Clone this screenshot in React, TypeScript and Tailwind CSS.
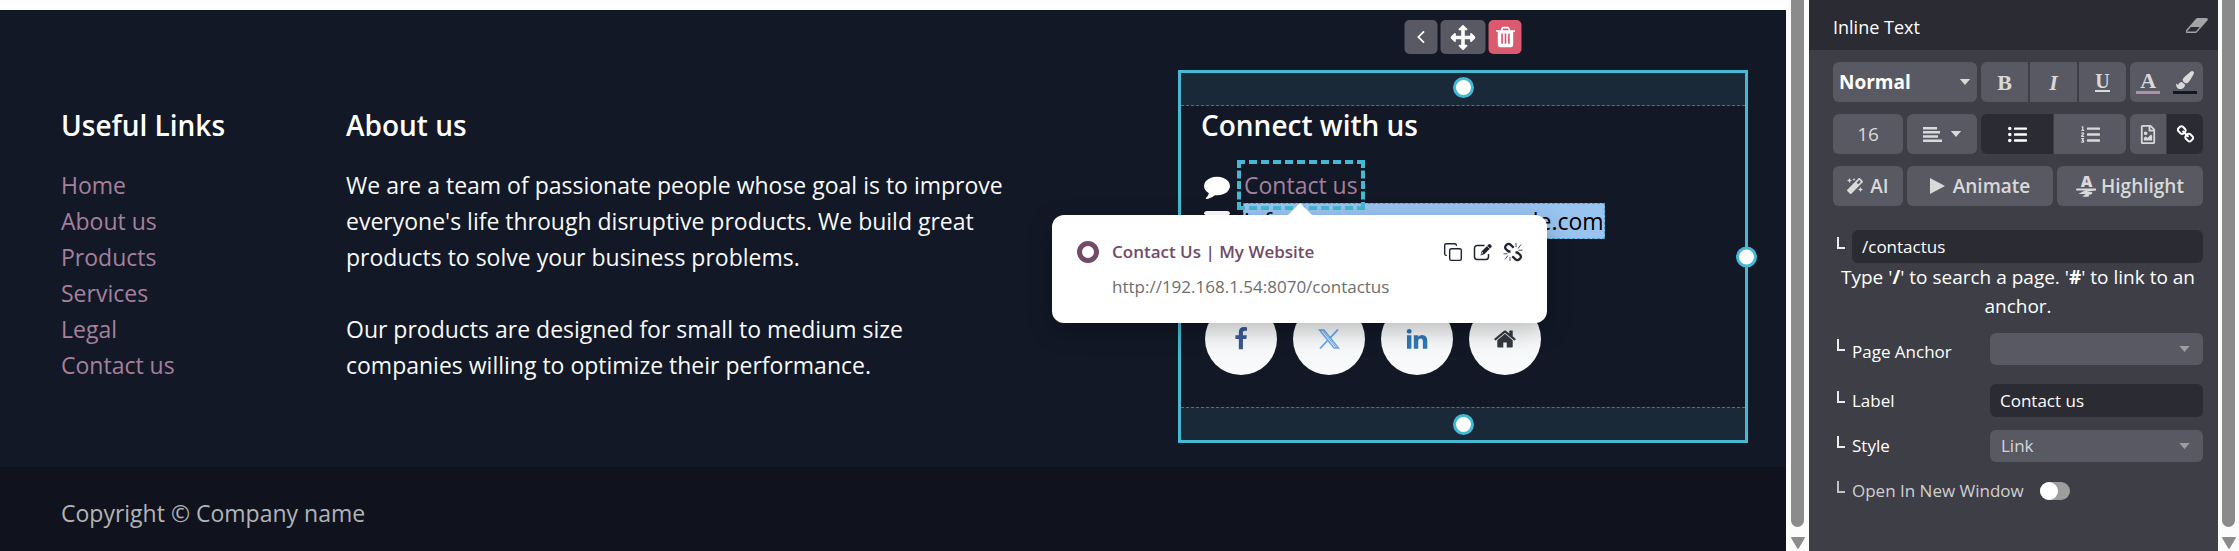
import type { ReactNode } from "react";
import { Copy } from "lucide-react";
import { FaListOl, FaListUl, FaMagic, FaPaintBrush, FaRegFileImage } from "react-icons/fa";

const LINKS = ["Home", "About us", "Products", "Services", "Legal", "Contact us"];

const PATHS = {
  comment:
    "M1792 896q0 174-120 321.5t-326 233-450 85.5q-70 0-145-8-198 175-460 242-49 14-114 22h-5q-15 0-27-10.5t-16-27.5v-1q-3-4-.5-12t2-10 4.5-9.5l6-9 7-8.5 8-9q7-8 31-34.5t34.5-38 31-39.5 32.5-51 27-59 26-76q-157-89-247.5-220t-90.5-281q0-174 120-321.5t326-233 450-85.5 450 85.5 326 233 120 321.5z",
  move:
    "M1792 896q0 26-19 45l-256 256q-19 19-45 19t-45-19-19-45v-128h-384v384h128q26 0 45 19t19 45-19 45l-256 256q-19 19-45 19t-45-19l-256-256q-19-19-19-45t19-45 45-19h128v-384h-384v128q0 26-19 45t-45 19-45-19l-256-256q-19-19-19-45t19-45l256-256q19-19 45-19t45 19 19 45v128h384v-384h-128q-26 0-45-19t-19-45 19-45l256-256q19-19 45-19t45 19l256 256q19 19 19 45t-19 45-45 19h-128v384h384v-128q0-26 19-45t45-19 45 19l256 256q19 19 19 45z",
  trash:
    "M704 1376v-704q0-14-9-23t-23-9h-64q-14 0-23 9t-9 23v704q0 14 9 23t23 9h64q14 0 23-9t9-23zm256 0v-704q0-14-9-23t-23-9h-64q-14 0-23 9t-9 23v704q0 14 9 23t23 9h64q14 0 23-9t9-23zm256 0v-704q0-14-9-23t-23-9h-64q-14 0-23 9t-9 23v704q0 14 9 23t23 9h64q14 0 23-9t9-23zm-544-992h448l-48-117q-7-9-17-11h-317q-10 2-17 11zm928 32v64q0 14-9 23t-23 9h-96v948q0 83-47 143.5t-113 60.5h-832q-66 0-113-58.5t-47-141.5v-952h-96q-14 0-23-9t-9-23v-64q0-14 9-23t23-9h309l70-167q15-37 54-63t79-26h320q40 0 79 26t54 63l70 167h309q14 0 23 9t9 23z",
  facebook:
    "M1343 12v264h-157q-86 0-116 36t-30 108v189h293l-39 296h-254v759h-306v-759h-255v-296h255v-218q0-186 104-288.5t277-102.5q147 0 228 12z",
  linkedin:
    "M477 625v991h-330v-991h330zm21-306q1 73-50.5 122t-135.5 49h-2q-82 0-132-49t-50-122q0-74 51.5-122.5t134.5-48.5 133 48.5 51 122.5zm1166 729v568h-329v-530q0-105-40.5-164.5t-126.5-59.5q-63 0-105.5 34.5t-63.5 85.5q-11 30-11 81v553h-329q2-399 2-647t-1-296l-1-48h329v144h-2q20-32 41-56t56.5-52 87-43.5 114.5-15.5q171 0 275 113.5t104 332.5z",
  home:
    "M1472 992v480q0 26-19 45t-45 19h-384v-384h-256v384h-384q-26 0-45-19t-19-45v-480q0-1 .5-3t.5-3l575-474 575 474q1 2 1 6zm223-69l-62 74q-8 9-21 11h-3q-13 0-21-7l-692-577-692 577q-12 8-24 7-13-2-21-11l-62-74q-8-10-7-23.5t11-21.5l719-599q32-26 76-26t76 26l244 204v-195q0-14 9-23t23-9h192q14 0 23 9t9 23v408l219 182q10 8 11 21.5t-7 23.5z",
  chain:
    "M1520 1216q0-40-28-68l-208-208q-28-28-68-28-42 0-72 32 3 3 19 18.5t21.5 21.5 15 19 13 25.5 3.5 27.5q0 40-28 68t-68 28q-15 0-27.5-3.5t-25.5-13-19-15-21.5-21.5-18.5-19q-33 31-33 73 0 40 28 68l206 207q27 27 68 27 40 0 68-26l147-146q28-28 28-67zm-703-705q0-40-28-68l-206-207q-28-28-68-28-39 0-68 27l-147 146q-28 28-28 67 0 40 28 68l208 208q27 27 68 27 42 0 72-31-3-3-19-18.5t-21.5-21.5-15-19-13-25.5-3.5-27.5q0-40 28-68t68-28q15 0 27.5 3.5t25.5 13 19 15 21.5 21.5 18.5 19q33-31 33-73zm895 705q0 120-85 203l-147 146q-83 83-203 83-121 0-204-85l-206-207q-83-83-83-203 0-123 88-209l-88-88q-86 88-208 88-120 0-204-84l-208-208q-84-84-84-204t85-203l147-146q83-83 203-83 121 0 204 85l206 207q83 83 83 203 0 123-88 209l88 88q86-88 208-88 120 0 204 84l208 208q84 84 84 204z",
};

function Glyph({ name, className }: { name: keyof typeof PATHS; className: string }) {
  return (
    <svg viewBox="0 0 1792 1792" className={className} fill="currentColor" aria-hidden="true">
      <path d={PATHS[name]} />
    </svg>
  );
}

function Caret({ className }: { className: string }) {
  return (
    <svg viewBox="0 0 12 7" className={className} fill="currentColor" aria-hidden="true">
      <path d="M0 0h12L6 7z" />
    </svg>
  );
}

function Scrollbar({ className }: { className: string }) {
  return (
    <div className={`flex shrink-0 flex-col items-center bg-[#fcfcfc] ${className}`} aria-hidden="true">
      <div className="w-[13px] flex-1 rounded-b-full bg-[#8b8b8b]" />
      <svg viewBox="0 0 14 12" className="mt-[10px] mb-[2px] h-3 w-[14px]" fill="#8b8b8b">
        <path d="M1 0h12q1.400 0 .7 1.200L7.800 11.300q-.8 1-1.600 0L.3 1.200Q-.4 0 1 0z" />
      </svg>
    </div>
  );
}

function Handle({ className }: { className: string }) {
  return <span className={`size-[21px] rounded-full border-[3px] border-[#45b8d3] bg-white ${className}`} />;
}

function Heading({ children }: { children: ReactNode }) {
  return <h5 className="mb-[23px] text-[28px] leading-[38px] font-semibold text-white">{children}</h5>;
}

function Social({ label, className, children }: { label: string; className: string; children: ReactNode }) {
  return (
    <a
      href="#"
      aria-label={label}
      className={`flex size-[72px] items-center justify-center rounded-full bg-[#f8f9fa] ${className}`}
    >
      {children}
    </a>
  );
}

function LinkPopover() {
  return (
    <div className="absolute top-12 left-[-149px] z-20 w-[495px] rounded-xl bg-white pt-[19px] pr-6 pb-5 pl-[25px] shadow-[0_8px_24px_rgba(0,0,0,0.25)]">
      <svg viewBox="0 0 26 13" className="absolute -top-3 left-[235px] h-[13px] w-[26px]" fill="#fff" aria-hidden="true">
        <path d="M0 13L13 0l13 13z" />
      </svg>
      <div className="flex items-center">
        <span className="size-[22px] rounded-full border-[5px] border-[#714b67]" />
        <a href="#" className="ml-[13px] flex-1 text-[17px] leading-9 font-semibold text-[#714b67]">
          Contact Us | My Website
        </a>
        <div className="flex items-center gap-[10px] text-[#1f2433]">
          <button type="button" aria-label="Copy link">
            <Copy className="size-5" strokeWidth={1.7} />
          </button>
          <button type="button" aria-label="Edit link">
            <svg viewBox="0 0 20 20" className="size-5" aria-hidden="true">
              <path
                d="M11.500 3.500H4.200A2.700 2.700 0 0 0 1.500 6.200v8.600a2.700 2.700 0 0 0 2.700 2.700h8.600a2.700 2.700 0 0 0 2.700-2.700V12"
                fill="none"
                stroke="currentColor"
                strokeWidth="1.500"
              />
              <path d="M15.800 2.300a1 1 0 0 1 1.400 0l1.300 1.300a1 1 0 0 1 0 1.400L11.300 12.300l-3.800 1.200 1.100-3.900z" fill="currentColor" />
              <path d="M14.300 4.200l2.500 2.500M8.700 12.300l1-2.200" stroke="#fff" strokeWidth=".8" />
            </svg>
          </button>
          <button type="button" aria-label="Remove link">
            <svg viewBox="0 0 20 20" className="size-5" fill="none" stroke="currentColor" aria-hidden="true">
              <path
                d="M7.500 9.500H5.600L2.900 7.200a2.600 2.600 0 0 1 0-3.700l.9-.9a2.600 2.600 0 0 1 3.700 0L10.700 5.800M12.500 10.500h1.900l2.700 2.300a2.600 2.600 0 0 1 0 3.700l-.9.9a2.600 2.600 0 0 1-3.700 0L9.300 14.200"
                strokeWidth="2.300"
              />
              <path d="M13 1v4M15 6.500l3-4M15.500 8.200h4M.5 11.800h4M5 13.500l-3 4M7 15v4" strokeWidth=".8" />
            </svg>
          </button>
        </div>
      </div>
      <a href="#" className="ml-[35px] block text-[17px] leading-[33px] text-[#6e6e6e]">
        http://192.168.1.54:8070/contactus
      </a>
    </div>
  );
}

function ConnectBlock() {
  return (
    <section className="relative col-span-4 col-start-9 border-[3px] border-[#45b8d3]">
      <div className="absolute -top-[53px] left-1/2 flex h-[34px] -translate-x-1/2 gap-[3px] text-white">
        <button type="button" aria-label="Select parent" className="flex w-[33px] items-center justify-center rounded-[5px] bg-[#595963]">
          <svg viewBox="0 0 10 16" className="h-[14px] w-[9px]" fill="none" stroke="currentColor" strokeWidth="2" aria-hidden="true">
            <path d="M8.500 1.500L2 8l6.500 6.500" />
          </svg>
        </button>
        <button type="button" aria-label="Move" className="flex w-[45px] items-center justify-center rounded-[5px] bg-[#595963]">
          <Glyph name="move" className="size-[25px]" />
        </button>
        <button type="button" aria-label="Delete" className="flex w-[33px] items-center justify-center rounded-[5px] bg-[#dc5a6e]">
          <Glyph name="trash" className="size-6" />
        </button>
      </div>

      <div className="flex h-[33px] items-start justify-center border-b border-dashed border-[#2f7f92] bg-[#1a2938] pt-1">
        <Handle className="" />
      </div>
      <div className="px-5 pb-8">
        <Heading>Connect with us</Heading>
        <ul className="text-[23px] leading-9">
          <li className="relative flex">
            <Glyph name="comment" className="mt-[6px] mr-[14px] ml-[3px] size-[26px] text-white" />
            <a
              href="#"
              className="relative z-10 text-[#a5809d] outline-4 outline-offset-[3px] outline-[#45b8d3] outline-dashed"
            >
              Contact us
            </a>
            <LinkPopover />
          </li>
          <li className="flex">
            <svg viewBox="0 0 26 20" className="mt-2 mr-[13px] ml-[3px] h-5 w-[26px]" fill="#fff" aria-hidden="true">
              <path d="M3 0h20a3 3 0 0 1 3 3L13 12 0 3a3 3 0 0 1 3-3zM0 6l13 9 13-9v11a3 3 0 0 1-3 3H3a3 3 0 0 1-3-3z" />
            </svg>
            <a href="#" className="border border-dashed border-[#4a9fc4] bg-[#99c4f0] leading-[34px] text-black">
              info@yourcompany.example.com
            </a>
          </li>
          <li className="h-9" />
        </ul>
        <div className="mt-7 ml-1 flex gap-4">
          <Social label="Facebook" className="text-[#3b5998]">
            <Glyph name="facebook" className="size-6" />
          </Social>
          <Social label="X" className="text-[#67a9ee]">
            <svg viewBox="0 0 22 20" className="h-5 w-[22px]" fill="none" stroke="currentColor" aria-hidden="true">
              <path d="M1.500 1H6l14.500 18H16z" strokeWidth="1.500" />
              <path d="M4 1l14.500 18" strokeWidth="1" />
              <path d="M20 .5l-8 8.700M9.500 11.500L2 19.500" strokeWidth="1.800" />
            </svg>
          </Social>
          <Social label="LinkedIn" className="text-[#2f78b7]">
            <Glyph name="linkedin" className="size-6" />
          </Social>
          <Social label="Home page" className="text-[#343a40]">
            <Glyph name="home" className="size-6" />
          </Social>
        </div>
      </div>
      <div className="flex h-[33px] items-center justify-center border-t border-dashed border-[#2f7f92] bg-[#1a2938]">
        <Handle className="" />
      </div>
      <Handle className="absolute top-1/2 -right-3 -translate-y-1/2" />
    </section>
  );
}

function Canvas() {
  return (
    <main className="flex min-w-0 flex-1 flex-col bg-white pt-[10px]">
      <div className="grid grid-cols-12 bg-[#121826] px-[38px] pt-[60px] pb-6">
        <nav className="col-span-2 px-[23px] pt-9">
          <Heading>Useful Links</Heading>
          <ul className="text-[23px] leading-9">
            {LINKS.map((label) => (
              <li key={label}>
                <a href="#" className="text-[#a5809d]">
                  {label}
                </a>
              </li>
            ))}
          </ul>
        </nav>
        <section className="col-span-5 px-[23px] pt-9">
          <Heading>About us</Heading>
          <div className="flex flex-col gap-9 text-[23px] leading-9 text-[#f8f9fa]">
            <p>
              We are a team of passionate people whose goal is to improve everyone's life through disruptive products. We
              build great products to solve your business problems.
            </p>
            <p>
              Our products are designed for small to medium size
              <br />
              companies willing to optimize their performance.
            </p>
          </div>
        </section>
        <ConnectBlock />
      </div>
      <footer className="flex-1 bg-[#10131e] px-[61px] pt-7 text-[23px] leading-9 text-[#b1b3b7]">
        Copyright © Company name
      </footer>
    </main>
  );
}

function Branch() {
  return <span className="mr-[7px] mb-2 ml-1 h-3 w-2 border-b-2 border-l-2 border-current opacity-90" aria-hidden="true" />;
}

function SelectField({ id, options }: { id: string; options: string[] }) {
  return (
    <div className="relative h-8 w-[213px]">
      <select
        id={id}
        className="size-full appearance-none rounded-md bg-[#595963] px-[11px] text-[17px] text-[#d6d6d8]"
      >
        {options.map((o) => (
          <option key={o}>{o}</option>
        ))}
      </select>
      <Caret className="pointer-events-none absolute top-[13px] right-[13px] h-[6px] w-[11px] text-[#9d9da0]" />
    </div>
  );
}

function OptionsPanel() {
  const btn = "flex h-10 items-center justify-center bg-[#595963] text-[#d9d9d9]";
  return (
    <aside className="w-[409px] shrink-0 bg-[#3e3e46] text-[17px] text-white">
      <header className="flex h-[50px] items-center justify-between bg-[#2b2b33] pt-1 pr-[10px] pl-6">
        <h2 className="text-lg leading-6">Inline Text</h2>
        <button type="button" aria-label="Remove format" className="mb-1 text-[#a3a3a3]">
          <svg viewBox="0 256 1860 1290" className="h-[15px] w-[22px]" fill="currentColor" aria-hidden="true">
            <path d="M832 1408l336-384h-768l-336 384h768zm1013-1077q15 34 9.500 71.500t-30.500 65.500l-896 1024q-38 44-96 44h-768q-38 0-69.500-20.500t-47.500-54.500q-15-34-9.500-71.500t30.500-65.500l896-1024q38-44 96-44h768q38 0 69.500 20.500t47.500 54.500z" />
          </svg>
        </button>
      </header>

      <div className="flex flex-col pt-3 pr-[15px] pl-6">
        <div className="grid grid-cols-[70px_70px_145px_73px] gap-x-1 gap-y-3">
          <button type="button" className="col-span-2 flex h-10 items-center justify-between rounded-md bg-[#595963] px-[6px] text-[19px] font-bold text-white">
            Normal
            <Caret className="h-[6px] w-3 text-[#d9d9d9]" />
          </button>
          <div className="flex gap-[2px] overflow-hidden rounded-md font-['Liberation_Serif',serif] text-[22px]">
            <button type="button" className={`${btn} flex-1 font-bold`}>
              B
            </button>
            <button type="button" className={`${btn} flex-1 font-bold italic`}>
              I
            </button>
            <button type="button" className={`${btn} flex-1 font-bold`}>
              <span className="border-b-2 border-current text-[20px] leading-[17px]">U</span>
            </button>
          </div>
          <div className="flex overflow-hidden rounded-md">
            <button type="button" aria-label="Text color" className={`${btn} flex-1 flex-col`}>
              <span className="font-['Liberation_Serif',serif] text-[22px] leading-5 font-bold">A</span>
              <span className="h-[3px] w-6 bg-[#b08fa9]" />
            </button>
            <button type="button" aria-label="Background color" className={`${btn} flex-1 flex-col`}>
              <FaPaintBrush className="mb-[2px] size-[18px]" />
              <span className="h-[3px] w-6 bg-[#121826]" />
            </button>
          </div>

          <button type="button" className={`${btn} rounded-md text-[19px]`}>
            16
          </button>
          <button type="button" aria-label="Alignment" className={`${btn} gap-2 rounded-md`}>
            <svg viewBox="0 0 19 15" className="h-[15px] w-[19px]" fill="currentColor" aria-hidden="true">
              <path d="M0 0h14v2.500H0zM0 4.100h17v2.500H0zM0 8.300h15v2.500H0zM0 12.500h19V15H0z" />
            </svg>
            <Caret className="h-[6px] w-3" />
          </button>
          <div className="flex gap-[1px] overflow-hidden rounded-md">
            <button type="button" aria-label="Bulleted list" className="flex h-10 flex-1 items-center justify-center bg-[#2b2b33] text-white">
              <FaListUl className="size-[19px]" />
            </button>
            <button type="button" aria-label="Numbered list" className={`${btn} flex-1`}>
              <FaListOl className="size-[19px]" />
            </button>
          </div>
          <div className="flex gap-[1px] overflow-hidden rounded-md">
            <button type="button" aria-label="Image" className={`${btn} flex-1`}>
              <FaRegFileImage className="h-[19px] w-4" />
            </button>
            <button type="button" aria-label="Link" className="flex h-10 flex-1 items-center justify-center bg-[#2b2b33] text-white">
              <Glyph name="chain" className="size-[19px]" />
            </button>
          </div>
        </div>

        <div className="mt-3 flex gap-1 text-[19px] font-semibold">
          <button type="button" className={`${btn} w-[70px] gap-[7px] rounded-md`}>
            <FaMagic className="size-4" />
            AI
          </button>
          <button type="button" className={`${btn} flex-1 gap-2 rounded-md`}>
            <svg viewBox="0 0 15 16" className="h-4 w-[15px]" fill="currentColor" aria-hidden="true">
              <path d="M0 0l15 8-15 8z" />
            </svg>
            Animate
          </button>
          <button type="button" className={`${btn} flex-1 gap-1 rounded-md`}>
            <span className="flex flex-col items-center" aria-hidden="true">
              <span className="text-base leading-[13px] font-extrabold">A</span>
              <svg viewBox="0 0 21 9" className="h-[9px] w-[21px]" fill="none" stroke="currentColor" strokeWidth="2" strokeLinecap="round">
                <path d="M1 1.500h19q-10 1-14 3.500h10q-5 1-7 2.800h3" />
              </svg>
            </span>
            Highlight
          </button>
        </div>

        <div className="mt-6 flex items-center">
          <Branch />
          <input
            aria-label="Link URL"
            defaultValue="/contactus"
            className="h-[33px] min-w-0 flex-1 rounded-md bg-[#2b2b33] px-[10px] text-[17px] text-white"
          />
        </div>
        <p className="text-center text-[19px] leading-[29px]">
          Type '<b>/</b>' to search a page. '<b>#</b>' to link to an anchor.
        </p>

        <div className="mt-3 flex items-center">
          <Branch />
          <label htmlFor="anchor" className="flex-1 self-end leading-[26px]">
            Page Anchor
          </label>
          <SelectField id="anchor" options={[""]} />
        </div>
        <div className="mt-[19px] flex items-center">
          <Branch />
          <label htmlFor="label" className="flex-1">
            Label
          </label>
          <input
            id="label"
            defaultValue="Contact us"
            className="h-[33px] w-[213px] rounded-md bg-[#2b2b33] px-[10px] text-[17px] text-white"
          />
        </div>
        <div className="mt-[13px] flex items-center">
          <Branch />
          <label htmlFor="style" className="flex-1">
            Style
          </label>
          <SelectField id="style" options={["Link"]} />
        </div>
        <div className="mt-[15px] flex items-center text-[#d0d0d2]">
          <Branch />
          <label htmlFor="new-window" className="leading-7">
            Open In New Window
          </label>
          <input
            id="new-window"
            type="checkbox"
            role="switch"
            className="ml-4 h-[18px] w-[30px] appearance-none rounded-full bg-[#9d9d9d] before:block before:size-[18px] before:rounded-full before:bg-white checked:before:ml-3"
          />
        </div>
      </div>
    </aside>
  );
}

export default function App() {
  return (
    <div className="flex min-h-screen overflow-hidden font-['Open_Sans','Noto_Sans',sans-serif]">
      <Canvas />
      <Scrollbar className="w-[23px]" />
      <OptionsPanel />
      <Scrollbar className="w-[21px]" />
    </div>
  );
}
